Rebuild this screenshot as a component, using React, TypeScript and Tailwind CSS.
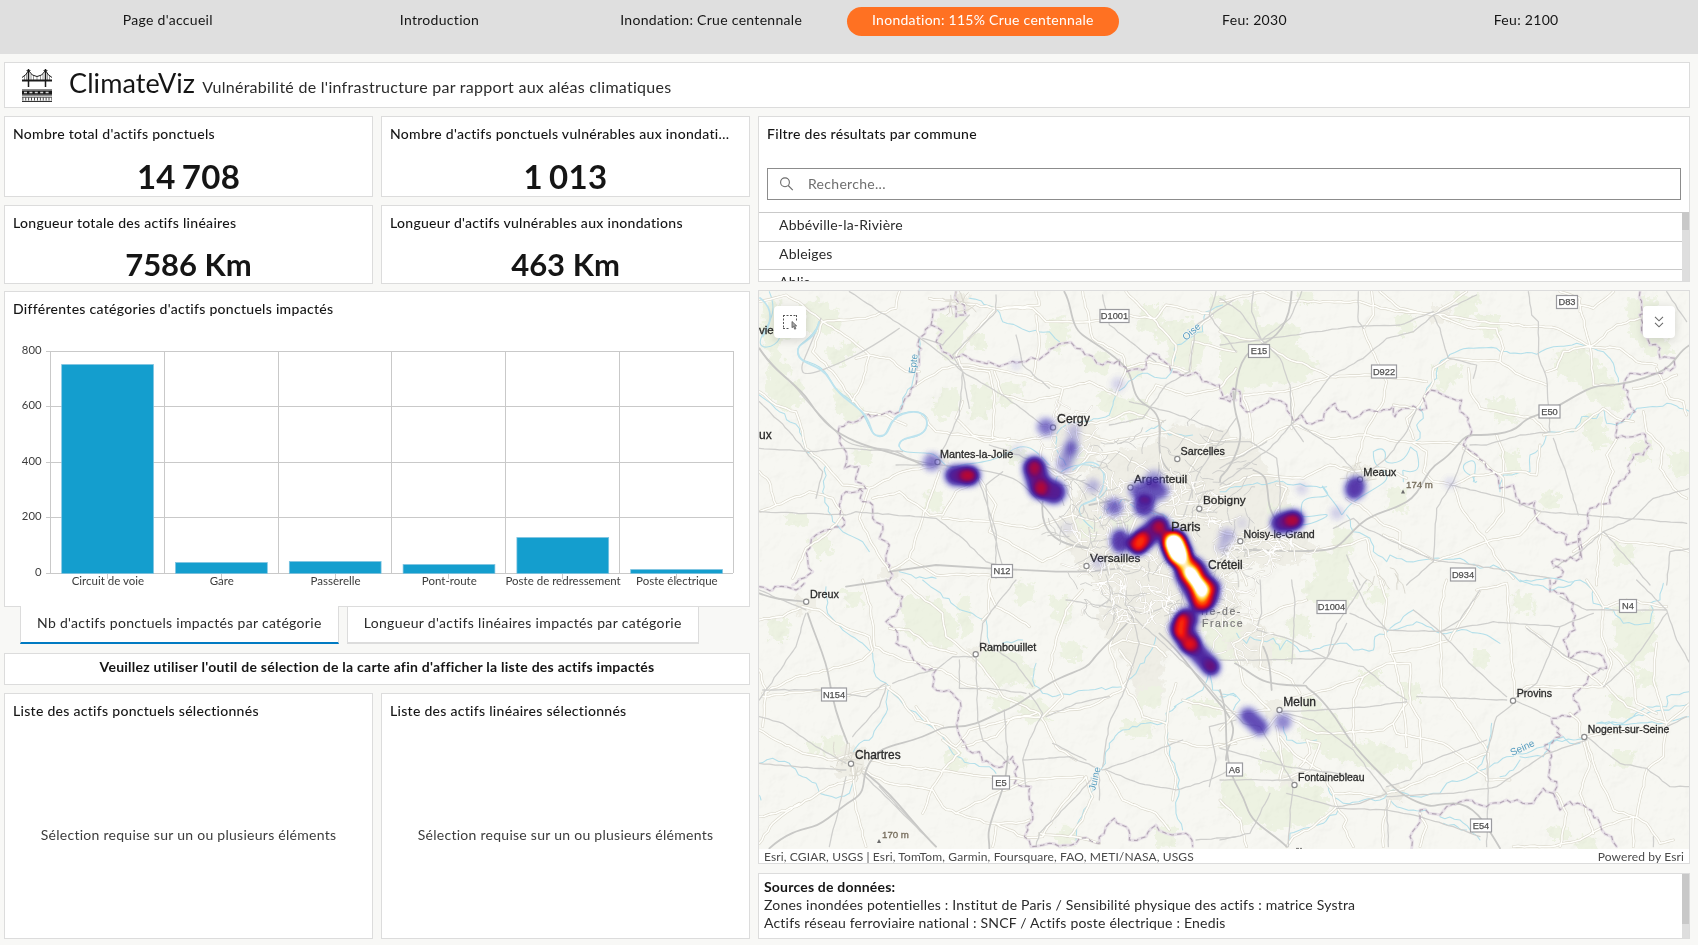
import { ReactNode } from "react";

/* ---------- Map data: each sheet is drawn on its own 3x grid ---------- */

type Sheet = {
  x: number;
  y: number;
  green: string[];
  urban: string[];
  rail: string[];
  motorway: string[];
  road: string[];
  water: string[];
  border: string[];
};

const SHEETS: Sheet[] = [
  {
    x: 756,
    y: 285,
    green: [
      "M20 50h50v30h40v90h-40v60h-30v-40h-20z",
      "M130 60l50-20 60 30 20 60-50 20-60-10z",
      "M210 190h50v-20h40v40h-30v30h-50z",
      "M40 230h60v60h40v60l-50 30-60-50z",
      "M230 310l60 20 40 60-40 30-50-40z",
      "M545 90h90v40h-10v90l-60 10-20-60z",
      "M640 150h50v40h-40z",
      "M650 300h60v70h-20v30h-50z",
      "M730 290h70v40h-30v30h-50z",
      "M880 100h60v70l-30 30h-40z",
      "M980 220l60-20 30 30-20 40-60-10z",
      "M1160 60h60v60h50v50h-70v-30h-60z",
      "M1220 120l90-20 50 60-40 100-80-20z",
      "M1360 30h50v70h-40z",
      "M1100 240h60v40h-50z",
      "M1040 310l60 30 80 10-10 60-90-10-60-40z",
      "M560 310h50v60l-60 40-20-40z",
      "M290 490h60v50h-50z",
      "M500 620h60v60h-50z",
      "M160 760l50-10 20 50-50 20z",
      "M930 470h50v60h-40z",
      "M960 700h60v60h-50z",
      "M1060 700h70v50h-60z",
      "M90 690h60v40h-50z",
      "M750 480l60 20 10 30-60 10z",
    ],
    urban: [
      "M600 30h40v50h-40z",
      "M900 390l100 20 40 60-30 80-60 20-60-60z",
      "M1000 560l80-60 100-20 80-60 160 10v480h-380l-90-90-40-100z",
      "M520 510h60v40h-60z",
      "M370 850h60v30h-60z",
    ],
    rail: [
      "M10 190C60 260 100 280 130 320S220 420 260 460S400 480 440 510S600 540 700 560S800 600 860 660S900 760 1000 790",
      "M195 100C150 220 130 240 140 260S240 240 300 210S400 150 430 130",
      "M10 490L180 500 260 490 440 500",
      "M280 20L480 150 560 210 620 260 740 330 860 420",
      "M620 260L610 390 540 540 420 540",
      "M700 480L760 500 860 540 1000 600",
      "M720 30L720 80 590 210 620 260 640 370",
      "M740 560L690 600 700 700 750 880",
      "M1440 40L1320 120 1300 260 1230 300 1160 400 1060 420",
      "M1120 350L1240 380 1400 440",
      "M10 680L270 690 300 680 540 700 620 760 690 830 760 850",
      "M640 90L560 180 500 160",
      "M880 310L800 240 780 150",
      "M10 350L100 440 150 500 200 560 180 640",
      "M1440 400L1330 560 1280 700 1240 760",
      "M660 560L700 680 720 740 720 880",
      "M1040 30L1060 120 1200 230",
      "M1380 20L1360 90 1440 200",
    ],
    motorway: [
      "M925 20C950 60 940 120 980 150S1080 210 1110 250S1120 330 1170 360S1210 420 1210 480S1240 560 1280 590",
      "M10 190C60 270 120 290 160 350S230 440 300 470S420 500 500 540",
      "M400 860L540 840 700 850 900 860 1000 860 1090 850",
      "M860 650C850 740 900 780 1000 790",
      "M1000 660L1100 640 1220 690 1250 760",
    ],
    road: [
      "M10 50L90 30 140 60 200 110 280 160 340 210 400 220 450 260 490 260",
      "M200 110L170 200 230 260 280 330 320 380 390 390 450 420",
      "M200 110L330 100 420 70 430 20",
      "M10 320L60 360 120 380 140 440 150 490 210 540 260 600 340 610 440 560 540 540",
      "M300 220L340 210 320 290 290 350",
      "M480 300L560 250 620 240 700 250 800 270 830 280 850 180 840 90",
      "M520 40L600 50 720 70 830 70 870 110 1000 110 1010 160 1100 210 1110 250",
      "M840 20L850 60 720 70 640 160 600 210 620 250 700 260 715 330 710 460",
      "M620 350L600 400 650 450 790 470 900 450",
      "M715 260L740 330 820 350 910 330",
      "M500 390L540 440 620 450 700 470 760 460",
      "M830 280L920 310 1000 290 1080 330 1110 250 1180 230 1300 260 1310 170 1440 200",
      "M920 310L900 390 960 420 1050 410 1120 380 1220 410",
      "M980 20L1000 110 1100 90 1200 100 1230 60 1370 90 1300 150",
      "M1110 20L1190 100 1260 180 1250 240",
      "M10 680L60 660 160 620 230 640 260 690 210 750 150 790 110 880",
      "M60 660L40 590 10 560",
      "M340 610L310 700 340 760 400 860 460 820 500 700 550 560",
      "M350 640L430 620 520 690 560 690 600 620 640 600",
      "M460 820L540 870 700 870",
      "M560 700L700 710 830 730 950 690 940 590 870 540",
      "M670 580L720 660 700 740 770 780 860 830 960 780",
      "M860 480L850 530 900 570 960 560 1000 510 1080 500 1180 560",
      "M950 690L1020 710 1090 680 1160 620",
      "M950 690L980 790 1060 830 1140 850 1250 880",
      "M1340 600L1250 640 1140 700 1100 810",
      "M1370 440L1300 560 1240 600 1260 690 1380 700",
      "M1080 640L1110 740 1050 800 1030 880",
      "M1440 460L1330 480 1240 440 1060 470 960 440",
      "M1170 350L1200 300 1290 330 1390 310 1440 250",
    ],
    water: [
      "M40 20C70 90 30 120 15 160S60 190 70 160",
      "M190 110C170 170 120 170 125 205S190 220 220 280S280 330 310 370S340 450 370 455S390 400 440 385S530 390 510 430S430 450 430 480S480 500 520 505S560 560 600 545S700 540 760 500S850 510 880 540",
      "M490 160L485 230 470 290 440 340 430 380",
      "M640 40L720 70 740 110 820 140 880 140 910 170",
      "M1400 60L1350 80 1340 140 1260 180 1250 250 1230 280 1160 265 1080 320 1060 390 1000 410 930 420 900 450 900 490 930 540",
      "M900 600C890 540 1010 520 1040 560S1050 640 1000 650S970 700 1010 730",
      "M10 330L70 380 130 430 150 500 210 540 200 620 230 710 260 740 320 770 340 800",
      "M1030 700L1100 640 1140 670 1250 700 1300 780 1340 850",
      "M1170 440L1210 420 1240 450 1310 450",
      "M430 860L480 880 540 880",
    ],
    border: [
      "M600 20L605 50 625 60 630 90 600 95 600 65 530 75 525 120 490 160 490 220 480 300 430 380 320 395 250 425 250 470 270 500 265 550 310 545 300 590 330 610 270 620 250 660 265 720 180 750 150 800 170 860 110 900",
      "M525 120L560 140 540 170 560 200 590 220 620 208 670 230 720 240 800 230 860 215 900 185 945 172 960 190 1000 210 1040 240 1090 225 1110 260 1160 255 1190 205 1240 240 1245 260 1330 270 1340 290 1390 300 1400 340 1440 345",
      "M310 610L320 650 350 660 350 700 380 720 370 760 400 780 390 830 410 870 395 900",
    ],
  },
  {
    x: 1220,
    y: 285,
    green: [
      "M0 50h110v70h40v60h80l70 60-50 50-130 10-80 30H0z",
      "M150 120l70-10 30 40-40 40-60-10z",
      "M230 20h50v40h-40z",
      "M520 90h60v60h-40z",
      "M700 20l80 10-10 60-60 20z",
      "M640 240h80v50l-60 30z",
      "M770 90h70v70h-50z",
      "M1000 200l90-10 60 60 60 60-10 70-80-30-50-60-60-20z",
      "M1220 40h90v80l60 90h-90l-50-60z",
      "M800 340h90v70h-60z",
      "M1080 400l60-10 30 80-50 30z",
      "M1230 470h60v60h-60z",
      "M1350 500h60v70h-50z",
      "M280 800h110v100H290z",
      "M340 730h60v70h-60z",
      "M500 610h60v70h-50z",
      "M140 660h80v70h-70z",
      "M850 500h50v70h-40z",
      "M960 620h60v50h-50z",
      "M1180 780h60v60h-60z",
    ],
    urban: ["M0 460h100l40 90 60 60 20 110 70 60-60 60H60l-60 60z", "M390 540h60v60h-60z", "M630 60h60v50h-60z"],
    rail: [
      "M100 20L95 80 125 165 180 220 210 300 215 420 250 470",
      "M0 180L120 165 400 125 540 120 640 80",
      "M245 20L210 100 125 165",
      "M415 20L415 110 430 130",
      "M0 40L60 80 125 165",
      "M770 30L640 90 580 140 500 160 430 220 330 275 250 380 150 490 0 600",
      "M640 90L660 130 685 220 770 240 760 280",
      "M925 20L935 90 955 110 955 210 980 280 990 440",
      "M240 420L340 490 400 555",
      "M590 370L560 440 500 520 410 590",
      "M740 480L700 590 650 670 640 830 560 900",
      "M690 600L860 640 960 680 1100 690 1400 715",
      "M1000 460L1040 570 1075 690",
      "M1410 610L1300 640 1240 700 1150 740 1080 800 1000 850",
      "M1150 740L1230 830 1290 900",
      "M340 730L400 700 420 720 560 790 640 825 760 840 990 880",
      "M990 440L900 450 800 480 750 480",
      "M1340 20L1400 110",
      "M0 470L90 470 120 490 170 520 180 600 180 780",
      "M1340 900L1350 800 1410 790",
      "M0 550L140 470",
      "M380 810L420 900",
    ],
    motorway: [
      "M215 20C210 120 170 160 120 180S50 250 45 340",
      "M40 320C40 420 80 420 50 500S0 560 0 590",
      "M1410 180C1370 200 1370 240 1310 265S1200 300 1150 302S1060 340 1000 370S930 390 900 420S800 450 760 450S710 500 660 530S610 620 560 650S470 680 430 710S370 780 340 790S200 800 100 795S20 790 0 830",
      "M100 555C140 570 140 580 145 640S180 720 230 760",
    ],
    road: [
      "M0 50L130 20 200 50 330 50 420 50 530 80 640 85 780 110 1010 130 1110 185",
      "M455 20L460 90 430 130 450 180 500 290 490 350 440 430 420 500 400 560",
      "M330 275L450 270 620 290",
      "M0 140L60 160 120 165 200 220 260 240 330 275 190 320 70 330 90 400 100 480",
      "M640 85L700 110 760 130 830 130 850 190 840 230 900 270 980 300",
      "M480 20L540 70 640 90 700 50 740 20",
      "M840 230L690 220 640 250 640 290 590 370 520 360",
      "M745 250L750 320 780 370 880 390 940 400 980 440",
      "M1180 20L1120 70 1080 60 1110 185 1030 200 1010 250 980 260",
      "M1110 185L1190 120 1260 100",
      "M1110 185L1200 190 1250 230 1310 240",
      "M1110 185L1120 300 1180 300",
      "M1020 20L1080 40 1080 80",
      "M970 450L1070 435 1120 390 1150 370 1190 400 1240 410",
      "M1310 250L1350 340 1390 350 1400 390",
      "M1270 380L1280 440 1330 490 1320 550 1360 610 1400 640",
      "M190 430L230 420 330 460 430 450 540 470 720 475",
      "M190 430L130 470 60 510 0 520",
      "M210 310L220 360 215 430",
      "M580 475L620 500 610 560 640 590 700 600",
      "M580 460L560 400 590 370",
      "M700 600L760 570 900 560 950 570 960 480",
      "M730 490L800 540 850 580 850 680 800 740",
      "M640 830L700 810 800 770 900 750 960 680",
      "M700 600L730 680 800 770 850 850 880 880",
      "M400 560L330 540 250 580 100 570 0 610",
      "M400 560L490 550 560 580",
      "M380 640L420 660 490 720 540 740 540 790",
      "M0 790L100 770 180 760 270 800 380 780 440 760",
      "M440 760L450 810 490 900",
      "M640 825L580 790 490 750",
      "M1190 460L1160 510 1180 560 1150 640 1140 740 1130 900",
      "M1060 800L1140 740 1200 770 1330 780 1410 800",
      "M1240 310L1300 300 1370 270",
      "M0 740L80 760 150 720 200 610 170 600",
      "M0 880L60 850 80 900",
      "M830 450L850 500 850 560",
    ],
    water: [
      "M680 220L720 195 760 190 830 190 870 205 950 208 1000 185 1070 175 1100 185 1150 200 1180 235 1195 290",
      "M680 220L655 240 650 280 620 310 600 370 610 400 590 420 600 460 585 470",
      "M1410 380L1340 355 1310 365 1250 370 1230 400 1190 420 1160 415 1150 370 1130 400 1085 395 1060 440 980 440 960 490 930 510 930 560 850 570 840 620",
      "M760 590C770 540 770 520 745 530S730 560 750 570S760 600 770 590",
      "M590 500C600 540 600 560 570 560S550 540 550 590",
      "M460 500C490 480 500 500 495 520S540 540 560 510S560 480 590 500",
      "M460 500C460 560 490 540 500 570S430 620 390 660S380 700 340 650S300 590 320 620S250 620 245 660S240 700 300 690S280 720 240 720",
      "M0 620L80 600 190 590 220 600 320 605",
      "M380 690L400 740 450 760 460 800 500 830 510 810 560 830 640 820 720 820 780 850 820 840 880 870 900 890 1000 880 1060 890",
    ],
    border: [
      "M0 340L30 350 40 310 60 320 70 370 95 380 130 360 150 340 200 360 220 410 245 390 260 415 310 405 320 375 345 355 360 380 400 400 430 380 480 380 520 365 525 395 550 370 620 370 610 340 630 315 680 335 725 345 720 380 745 400 755 440 730 480 770 510 800 550 830 570 840 610 880 600 900 660 945 650 950 700 990 730 1040 750 1040 780 1080 760 1080 820 1020 825 995 830 1030 860 990 900",
      "M1260 20L1265 140 1290 180 1320 190 1320 220 1365 220 1365 245 1310 265 1230 265 1210 310 1245 380 1190 415 1190 460 1240 455 1270 445 1290 480 1270 510 1240 510 1220 570 1180 610 1170 655 1110 670 1100 730 1080 740 1085 820",
    ],
  },
  {
    x: 756,
    y: 580,
    green: [
      "M430 50l120 10 60 80-30 70-130-40z",
      "M600 60l40-20 10 120-30 20z",
      "M680 210l110 10 40 80-90 20-70-60z",
      "M790 230l40 40 10 60-50-20z",
      "M770 10h60v60h-50z",
      "M880 50h60v80h-40z",
      "M770 350l90 10 30 60-80 10z",
      "M700 350h70v40h-60z",
      "M30 120h70v60h-60z",
      "M200 470h60v50h-60z",
      "M150 490h40v30h-40z",
      "M260 30h60v50h-50z",
      "M910 190h70v50h-60z",
      "M1100 420h90v50h-80z",
      "M1150 320h60v60h-60z",
      "M900 740h60v60h-60z",
      "M1330 130l80 10 30 60v40h-70z",
      "M1300 360h90v50h-80z",
      "M1200 740h60v60h-60z",
      "M560 520l50-10 20 50-50 20z",
    ],
    urban: ["M240 500h90v90h-90z", "M1090 0h350v90l-100 60-90 60-110 60-60-60-60-90z", "M120 50h60v50h-60z", "M1100 150h120v200h-80z", "M640 200h40v40h-40z"],
    rail: [
      "M10 360L120 200 150 100",
      "M20 330L180 330 250 340 330 350 390 310",
      "M10 410L80 430 180 500 270 550",
      "M390 320L370 380 290 470",
      "M150 90L10 30",
      "M270 590L220 800",
      "M10 550L120 560 270 570",
      "M660 230L665 420 680 480 760 550",
      "M660 230L590 230 540 270 490 280 410 310",
      "M670 200L680 130 740 50 780 0",
      "M690 190L780 250 830 320",
      "M745 390L755 530",
      "M820 340L860 400 820 480 800 540 810 620",
      "M800 540L940 530 1040 570 1100 550 1280 480",
      "M870 410L960 370 1060 350",
      "M890 490L990 540",
      "M1030 570L960 650 850 760 840 800",
      "M1040 560L1060 430 1110 320 1150 190 1130 110",
      "M1050 570L1150 610 1260 630 1360 600 1440 560",
      "M370 620L540 800",
      "M320 580L410 670 540 800",
      "M1030 80L1060 60 1130 110 1200 170 1330 290 1390 360",
      "M610 240L610 325 700 325 810 340",
      "M1270 60L1180 100 1050 80 930 60",
      "M1440 420L1360 440 1380 540 1360 620",
      "M1440 770L1320 780",
      "M1030 660L1030 570",
    ],
    motorway: [
      "M155 100C180 180 210 230 220 300S250 430 275 490",
      "M270 20L400 0",
      "M40 805C90 760 130 750 170 740S240 690 290 660S310 600 340 550S400 500 470 480S540 440 600 440S700 410 750 390S840 330 900 300S990 270 1010 240S1100 150 1130 110",
      "M755 530C750 620 730 650 710 710S700 770 700 805",
      "M10 40C60 60 100 60 150 65",
      "M330 580C420 650 460 720 540 800",
      "M1210 160C1280 220 1310 280 1390 370S1410 480 1410 540",
    ],
    road: [
      "M10 120L80 110 140 80 190 90 240 130 340 170 350 210 320 240 220 270 120 290 20 340",
      "M320 0L345 80 355 200 440 240 560 270 620 310 720 340",
      "M10 270L30 340 20 440",
      "M10 450L60 480 140 520 230 540 290 520",
      "M390 320L430 350 480 420 520 430 560 440",
      "M400 320L250 350 180 330 20 350",
      "M290 600L220 620 120 680 60 700 10 710",
      "M290 560L300 690 330 800",
      "M340 540L450 560 540 570 700 590 820 600 980 590",
      "M320 570L400 610 530 630 560 680 600 700 720 640 820 600",
      "M560 480L610 520 570 560 530 620 500 700",
      "M600 700L700 730 780 730 820 720",
      "M480 380L540 450 600 500 640 450 790 410 860 410",
      "M660 240L570 170 560 100 470 30 440 0",
      "M660 240L700 290 740 350 850 400 900 500 960 540",
      "M860 410L920 350 880 270 900 180 930 90 980 30",
      "M680 120L700 100 700 0",
      "M400 145L460 150 520 200 600 220",
      "M620 500L720 470 760 420 840 400",
      "M990 590L1010 650 980 720 940 770",
      "M990 590L900 700 860 770 800 770 720 730",
      "M1050 570L1100 660 1200 700 1240 750",
      "M1090 210L1130 260 1100 330 1060 350 1000 380 880 400",
      "M1060 200L1100 180 1200 200 1230 230",
      "M1100 110L1060 200 1100 320 1140 360 1160 410 1230 430",
      "M1260 310L1240 370 1230 440 1230 520 1260 590 1250 660",
      "M1240 480L1340 500 1440 490",
      "M720 740L710 800",
      "M10 790L50 730 130 670",
      "M1280 360L1440 400",
      "M850 760L950 770 1030 790",
      "M820 140L760 100 720 80 700 30",
    ],
    water: [
      "M210 20L215 100 260 150 320 190 350 220 360 290 400 320 390 400 350 470 310 490 290 520",
      "M390 320L440 370 500 420 560 470 590 520 640 550 700 560 720 580",
      "M10 550L50 535 100 550 140 590 180 610 190 640 240 655 280 640 290 610",
      "M700 190L690 120 600 80 540 30 500 0",
      "M740 190L800 180",
      "M840 250L830 300 860 340 890 350 1000 330 1100 320 1140 280 1180 220 1200 170",
      "M1220 430L1170 430 1100 450 1060 490 1040 560 1010 600 1005 660 970 720 960 780",
      "M1260 380L1230 400 1230 440 1240 520 1270 600 1260 700 1280 750",
      "M1255 380L1340 330 1360 270 1370 330 1440 350",
      "M0 640L15 660",
    ],
    border: [
      "M10 20L50 30 90 20 120 30 145 10",
      "M390 0L440 50 435 80 390 125 420 150 420 190 460 210 500 265 540 270 530 320 590 340 615 380 605 450 635 510 670 515 680 545 740 560 770 530 785 560 775 610 825 620 820 660 830 700 805 770 825 800 960 790 970 775 1030 790 1050 740 1075 715 1110 740 1120 780 1170 770 1200 735 1230 760 1290 760 1310 800",
    ],
  },
  {
    x: 1220,
    y: 580,
    green: [
      "M250 0h130l40 40-50 50-110-20z",
      "M200 110h70v60h-60z",
      "M150 180h70v60h-70z",
      "M250 340l90 60 60 80 100 10 90 60-90 30-150-40-110-60z",
      "M10 600l60-20 70 50 80-20 80 10 40 60-60 50-120 20-80-20-80-50z",
      "M120 510h100v70h-100z",
      "M540 310h60v50h-60z",
      "M760 210h50v50h-60z",
      "M880 40h60v60h-50z",
      "M1180 80l120 10 10 90-60 90-60-60z",
      "M1170 350h70v60h-70z",
      "M1250 270h60v50h-60z",
      "M1180 510h60v50h-60z",
      "M990 740h60v40h-60z",
      "M1070 770h60v40h-60z",
      "M440 20h60v50h-60z",
      "M420 270h60v50h-60z",
      "M0 120h60v60H0z",
    ],
    urban: ["M0 0h60v130h60l60 60-40 80-80-20-60-80z", "M130 360h60v60h-60z", "M490 620h60v40h-60z", "M180 590h50v60h-50z"],
    rail: [
      "M120 0L125 100 110 150 215 180 320 235 430 260 500 320 560 360",
      "M215 0L225 70 215 250",
      "M0 240L130 240 320 235 380 130",
      "M440 0L380 90 350 130 320 235 250 310",
      "M390 100L500 150 660 155 820 125 1020 140 1120 100",
      "M500 150L440 80 400 0",
      "M580 90L660 155 760 260 860 350",
      "M660 155L720 120 780 30",
      "M920 145L1040 230 1150 270",
      "M1020 140L980 240 950 310 880 360 990 410",
      "M590 350L860 360",
      "M560 365L450 380 300 390 180 395",
      "M190 400L280 420 400 510 500 640",
      "M0 360L70 430 120 440 180 540 220 610 210 690 205 800",
      "M0 600L220 600",
      "M500 640L420 670 350 680 200 640",
      "M500 650L700 640 830 620 980 520 1100 480",
      "M500 660L505 800",
      "M800 800L805 600 800 520 830 410 880 370",
      "M500 620L570 600 610 550 800 480",
      "M1100 470L1200 550 1280 565 1350 620 1410 620",
      "M1410 250L1370 180 1340 90 1250 0",
      "M1340 100L1240 240 1150 320",
      "M1340 90L1100 90 1020 50",
      "M600 710L700 740 780 770",
      "M0 505L200 560 420 590",
      "M0 780L90 760 150 640",
      "M1300 800L1300 770",
      "M350 685L500 690 600 710",
      "M1340 440L1400 410",
    ],
    motorway: [
      "M0 330C30 420 10 460 25 540S60 620 80 680S150 750 200 800",
      "M45 250C100 280 110 310 200 315S240 310 270 330S340 400 370 450S440 540 470 570S530 640 590 665S640 670 700 670S790 720 840 805",
      "M130 200C150 240 150 270 155 330",
    ],
    road: [
      "M0 140L50 100 110 120 190 80 260 60",
      "M110 150L40 190 60 260 70 310 110 350 150 390 50 400 0 450",
      "M130 150L120 260 180 280 215 300 240 340",
      "M480 0L500 60 490 140 510 200 550 350 560 500",
      "M680 0L660 100 665 320 740 420 800 510",
      "M770 30L860 10 870 180 885 350",
      "M885 350L920 320 1150 320",
      "M570 250L500 250 430 290 320 330 200 360",
      "M430 290L400 360 400 500",
      "M560 370L520 430 490 450 340 460 290 460 180 400",
      "M520 430L530 460 670 490 800 590",
      "M570 250L570 370 600 420 605 550",
      "M510 220L620 200 690 180 740 100 780 30",
      "M170 440L190 560 180 600 270 570 300 490 260 480 270 520 240 560",
      "M180 470L220 520 300 570 340 640 350 680",
      "M800 520L700 560 540 630 500 640",
      "M340 640L420 640 480 650",
      "M350 680L280 740 220 770 200 800",
      "M350 680L380 720 370 740 400 800",
      "M510 660L490 720 490 800",
      "M0 660L60 720 80 800",
      "M0 500L50 480 130 460 170 410",
      "M1100 0L1150 80 1145 170 1175 250 1150 320",
      "M1150 80L1220 60 1340 80",
      "M1150 320L1080 260 1020 220 920 140",
      "M1150 310L1220 380 1340 430",
      "M1170 210L1240 290 1250 370 1310 400",
      "M1310 190L1300 300 1340 430 1410 370",
      "M1340 430L1330 530 1280 570 1250 710",
      "M1100 480L1140 600 1180 690 1240 710 1280 730 1320 790 1360 780",
      "M1090 480L1110 550 1080 640 1120 760",
      "M1010 640L1040 700 1020 800",
      "M1240 710L1240 800",
      "M1240 710L1150 740 1080 780 990 800 880 800",
      "M1100 470L1150 460 1230 450 1340 440",
      "M1080 470L1080 430 1050 400",
      "M600 800L620 740 600 700",
      "M805 520L800 600 870 600",
    ],
    water: [
      "M50 160L80 190 90 170 140 185 160 175 180 210 200 180 240 215 300 205 380 190 400 210 460 210 465 170 520 150 590 125 660 160 740 150 800 165 840 190",
      "M510 145L550 110 580 90",
      "M900 0L1000 30 1080 0 1120 30 1120 70 1180 90 1210 130 1290 130 1300 90 1290 70 1320 60 1330 10",
      "M1410 335L1340 350 1340 380 1280 380 1210 430 1130 430 1150 430 1250 430 1330 430 1410 410",
      "M1410 370L1330 390 1240 410 1200 435",
      "M1100 480L1060 480 1000 480 970 500 920 520 860 530 810 560 750 590 680 610 660 640",
      "M1080 490L1050 490 1030 470 990 490 970 530 900 530",
      "M900 540L880 570 840 590",
      "M815 430L800 520 770 580",
      "M660 640L590 650 520 630 480 660 430 660 370 670 330 640 320 600",
      "M510 660L530 680 580 690 620 690",
      "M660 710L720 720 760 760 780 780",
      "M670 730L740 750",
      "M190 440L200 480 240 490 290 480",
      "M355 690L310 730 240 750 210 760 210 790",
      "M0 350L40 340 60 360 40 390",
    ],
    border: [
      "M990 0L990 35 1030 40 1060 70 1065 150 1030 180 1045 235 1100 215 1135 220 1160 265 1105 290 1100 310 1060 345 1080 390 1050 410 995 415 1025 470 975 495 995 530 985 590 1010 605 1000 640 1020 690 1050 665 1090 675 1140 730 1190 800",
      "M1000 640L970 625 940 670 860 660 800 680 740 660 680 680 660 705 600 690 590 740 570 770 575 805",
    ],
  },
];

/* Adds the small irregularities of a surveyed line to a coarse polyline. */
function roughen(d: string, amp: number): string {
  if (d.includes("C")) return d;
  const n = d.match(/-?\d+(\.\d+)?/g)!.map(Number);
  let out = `M${n[0]} ${n[1]}`;
  let seed = n[0] * 7 + n[1] * 13 + 1;
  const rnd = () => {
    seed = (seed * 9301 + 49297) % 233280;
    return seed / 233280 - 0.5;
  };
  for (let i = 2; i < n.length; i += 2) {
    const [x0, y0, x1, y1] = [n[i - 2], n[i - 1], n[i], n[i + 1]];
    const len = Math.hypot(x1 - x0, y1 - y0);
    const steps = Math.max(1, Math.round(len / 16));
    for (let s = 1; s < steps; s++) {
      const t = s / steps;
      out += `L${(x0 + (x1 - x0) * t + rnd() * amp).toFixed(1)} ${(y0 + (y1 - y0) * t + rnd() * amp).toFixed(1)}`;
    }
    out += `L${x1} ${y1}`;
  }
  return out;
}

/* Short random streets around a centre, for the built-up areas. */
function streets(cx: number, cy: number, rx: number, ry: number, count: number, start: number): string {
  let seed = start;
  const rnd = () => {
    seed = (seed * 9301 + 49297) % 233280;
    return seed / 233280;
  };
  let out = "";
  for (let i = 0; i < count; i++) {
    const a = rnd() * Math.PI * 2;
    const r = Math.sqrt(rnd());
    let x = cx + Math.cos(a) * rx * r;
    let y = cy + Math.sin(a) * ry * r;
    let dir = rnd() * Math.PI * 2;
    out += `M${x.toFixed(1)} ${y.toFixed(1)}`;
    for (let s = 0; s < 4; s++) {
      x += Math.cos(dir) * (2 + rnd() * 5);
      y += Math.sin(dir) * (2 + rnd() * 5);
      dir += (rnd() - 0.5) * 1.4;
      out += `L${x.toFixed(1)} ${y.toFixed(1)}`;
    }
  }
  return out;
}

const HALO = "#f6f6f2";

function Place({ x, y, size = 12, dot, children, fill = "#2a2a2a" }: { x: number; y: number; size?: number; dot?: [number, number]; children: string; fill?: string }) {
  return (
    <>
      {dot && <circle cx={dot[0]} cy={dot[1]} r={2.6} fill="#fff" stroke="#8c8c8c" strokeWidth={1.2} />}
      <text x={x} y={y} fontSize={size} fill={fill} stroke={fill} strokeWidth={0.3}>
        {children}
      </text>
    </>
  );
}

const SHIELDS: [string, number, number, number][] = [
  ["D1001", 1114.5, 316, 29],
  ["D83", 1567, 302, 21],
  ["E15", 1259, 351, 21],
  ["D922", 1384, 371.5, 25],
  ["E50", 1549.5, 411.5, 21],
  ["N12", 1002, 571, 21],
  ["D934", 1463, 574.5, 25],
  ["D1004", 1331.5, 607, 29],
  ["N4", 1628, 606, 17],
  ["N154", 834, 694.5, 25],
  ["A6", 1234.5, 769.5, 16],
  ["E5", 1001, 782.5, 17],
  ["E54", 1481, 825.5, 21],
];

function HeatLayer() {
  return (
    <g filter="url(#heat)" stroke="#fff" fill="#fff" strokeLinecap="round" strokeLinejoin="round">
      <g stroke="none" filter="url(#soft)">
        <circle cx={932} cy={462} r={9} opacity={0.16} />
        <circle cx={1046} cy={427} r={9} opacity={0.17} />
        <circle cx={1114} cy={507} r={9} opacity={0.18} />
        <circle cx={1093} cy={486} r={7} opacity={0.09} />
        <circle cx={1118} cy={384} r={7} opacity={0.05} />
        <circle cx={1098} cy={563} r={6} opacity={0.06} />
        <circle cx={1227} cy={536} r={8} opacity={0.09} />
        <circle cx={1222} cy={547} r={6} opacity={0.07} />
        <circle cx={1242} cy={523} r={6} opacity={0.04} />
        <circle cx={1302} cy={489} r={6} opacity={0.05} />
        <circle cx={1337} cy={513} r={7} opacity={0.06} />
        <circle cx={1450} cy={483} r={6} opacity={0.04} />
        <circle cx={1283} cy={722} r={8.5} opacity={0.15} />
        <circle cx={1067} cy={528} r={6} opacity={0.03} />
        <circle cx={1018} cy={451} r={7} opacity={0.03} />
        <circle cx={1016} cy={365} r={5} opacity={0.04} />
        <g fill="none" stroke="#fff">
          <path d="M1074 430L1071 450" strokeWidth={12} opacity={0.08} />
          <path d="M1071 448L1064 465" strokeWidth={15} opacity={0.13} />
          <path d="M1248 716L1260 727" strokeWidth={17} opacity={0.22} />
          <path d="M955 475.5L970 475.5" strokeWidth={20} opacity={0.32} />
          <path d="M1034.5 468L1040 487L1054 492" strokeWidth={23} opacity={0.33} />
          <path d="M1281 523L1294 520" strokeWidth={20} opacity={0.33} />
          <path d="M1138 544L1159 526" strokeWidth={21} opacity={0.35} />
          <path d="M1174 543L1179 554" strokeWidth={27} opacity={0.3} />
          <path d="M1191 573L1203 594" strokeWidth={32} opacity={0.35} />
          <path d="M1181 558L1191 572" strokeWidth={21} opacity={0.35} />
          <path d="M1202 592L1202 603" strokeWidth={20} opacity={0.38} />
          <path d="M1204 585L1214 586" strokeWidth={14} opacity={0.22} />
          <path d="M1181 560L1190 572" strokeWidth={13} opacity={0.5} />
          <path d="M1191 574L1202 591" strokeWidth={17} opacity={0.5} />
          <path d="M1201 590L1202 600" strokeWidth={11} opacity={0.35} />
          <path d="M1174 543L1178 553" strokeWidth={22} opacity={1} />
          <path d="M1191 574L1202 589" strokeWidth={14} opacity={1} />
          <path d="M1187 619L1181 628L1189 642" strokeWidth={22} opacity={0.36} />
          <path d="M1182 620L1180 633" strokeWidth={12} opacity={0.46} />
          <path d="M1192 646L1211 667" strokeWidth={18} opacity={0.29} />
        </g>
        <ellipse cx={1355} cy={488} rx={10} ry={12} opacity={0.26} transform="rotate(20 1355 488)" />
        <ellipse cx={1149} cy={491} rx={20} ry={11} opacity={0.2} />
        <circle cx={1144} cy={506} r={10.5} opacity={0.27} />
        <circle cx={1154} cy={479} r={9} opacity={0.12} />
        <ellipse cx={1120} cy={541} rx={9.5} ry={12} opacity={0.26} />
        <ellipse cx={967.5} cy={475.5} rx={9} ry={7.5} opacity={0.28} />
        <ellipse cx={1034.5} cy={468} rx={7} ry={9} opacity={0.24} />
        <ellipse cx={1041} cy={488} rx={7.5} ry={9} opacity={0.26} />
        <ellipse cx={1292} cy={520.5} rx={9} ry={7.5} opacity={0.25} />
        <circle cx={1159} cy={527} r={7} opacity={0.25} />
        <ellipse cx={1140} cy={542} rx={8} ry={11} opacity={0.46} transform="rotate(30 1140 542)" />
        <ellipse cx={1186} cy={641} rx={6} ry={8} opacity={0.14} transform="rotate(-35 1186 641)" />
        <circle cx={1211} cy={666} r={7.5} opacity={0.14} />
      </g>
    </g>
  );
}

function ParisMap() {
  return (
    <svg className="block h-[558px] w-[930px]" viewBox="759 291 930 558" fontFamily="'Liberation Sans', Arial, sans-serif">
      <defs>
        <filter id="soft" filterUnits="userSpaceOnUse" x="759" y="291" width="930" height="558" colorInterpolationFilters="sRGB">
          <feGaussianBlur stdDeviation="3.1" />
        </filter>
        <filter id="heat" filterUnits="userSpaceOnUse" x="759" y="291" width="930" height="558" colorInterpolationFilters="sRGB">
          <feColorMatrix type="matrix" values="0 0 0 1 0  0 0 0 1 0  0 0 0 1 0  0 0 0 1 0" result="m" />
          <feComponentTransfer in="m">
            <feFuncR type="table" tableValues=".34 .32 .27 .27 .42 .70 .95 1 1 1 1" />
            <feFuncG type="table" tableValues=".33 .29 .18 .10 .05 .03 .07 .35 .8 1 1" />
            <feFuncB type="table" tableValues=".80 .76 .68 .60 .46 .22 .06 0 .2 1 1" />
            <feFuncA type="table" tableValues="0 .42 .8 .96 1 1 1 1 1 1 1" />
          </feComponentTransfer>
        </filter>
        <filter id="relief" x="0" y="0" width="100%" height="100%" colorInterpolationFilters="sRGB">
          <feTurbulence type="fractalNoise" baseFrequency="0.045" numOctaves="4" seed="8" />
          <feDiffuseLighting surfaceScale="1.5" lightingColor="#ffffff" diffuseConstant="1.15">
            <feDistantLight azimuth="225" elevation="60" />
          </feDiffuseLighting>
        </filter>
        <filter id="ragged" x="-5%" y="-5%" width="110%" height="110%" colorInterpolationFilters="sRGB">
          <feTurbulence type="fractalNoise" baseFrequency="0.05" numOctaves="3" seed="3" />
          <feDisplacementMap in="SourceGraphic" scale="44" xChannelSelector="R" yChannelSelector="G" />
        </filter>
      </defs>
      <rect x="759" y="291" width="930" height="558" fill="#f7f7f2" />
      {SHEETS.map((s) => (
        <g key={`land-${s.x}-${s.y}`} transform={`translate(${s.x} ${s.y}) scale(.33333)`} filter="url(#ragged)">
          <path d={s.urban.join("")} fill="#efeee6" />
          <path d={s.green.join("")} fill="#edf2e2" />
        </g>
      ))}
      <rect x="759" y="291" width="930" height="558" filter="url(#relief)" opacity="0.14" className="mix-blend-multiply" />
      <g fill="none" strokeLinejoin="round" strokeLinecap="round">
        {SHEETS.map((s) => (
          <g key={`lines-${s.x}-${s.y}`} transform={`translate(${s.x} ${s.y}) scale(.33333)`}>
            <path d={s.border.map((d) => roughen(d, 14)).join("")} stroke="#e6dfe6" strokeWidth="9" />
            <path d={s.water.map((d) => roughen(d, 9)).join("")} stroke="#b3dfea" strokeWidth="3.2" />
            <path d={s.road.map((d) => roughen(d, 5)).join("")} stroke="#dad7cb" strokeWidth="8.4" />
            <path d={s.road.map((d) => roughen(d, 5)).join("")} stroke="#fffffc" strokeWidth="4.8" />
            <path d={s.rail.map((d) => roughen(d, 3)).join("")} stroke="#cfcfcd" strokeWidth="3.8" />
            <path d={s.motorway.join("")} stroke="#c8c8c6" strokeWidth="5.4" />
            <path d={s.border.map((d) => roughen(d, 14)).join("")} stroke="#b3a6b5" strokeWidth="3.4" strokeDasharray="14 9" strokeLinecap="butt" />
          </g>
        ))}
        <path d="M760 298C776 310 770 326 763 336M819 322C814 345 796 340 798 353S820 362 830 380S850 400 862 412S868 436 880 436S886 420 903 414S930 416 926 428S900 434 899 446" stroke="#bde3ee" strokeWidth="1.8" />
        <path d="M1073 470C1090 455 1105 464 1104 480S1095 500 1082 505" stroke="#bde3ee" strokeWidth="1.5" />
        <path d={streets(1150, 545, 85, 85, 230, 17)} stroke="#dad7cb" strokeWidth="1.9" />
        <path d={streets(1150, 545, 85, 85, 230, 17)} stroke="#fff" strokeWidth="1.1" />
        <path d={streets(1160, 530, 105, 110, 150, 91)} stroke="#d0d0cd" strokeWidth="1" />
        <path d={streets(1240, 610, 40, 55, 34, 31) + streets(1072, 435, 22, 28, 24, 5) + streets(1275, 548, 36, 20, 24, 77)} stroke="#dad7cb" strokeWidth="1.8" />
        <path d={streets(1240, 610, 40, 55, 34, 31) + streets(1072, 435, 22, 28, 24, 5) + streets(1275, 548, 36, 20, 24, 77)} stroke="#fff" strokeWidth="1.1" />
        <path d={streets(851, 764, 13, 13, 14, 13) + streets(956, 302, 8, 10, 8, 3) + streets(1386, 580, 16, 8, 6, 41) + streets(1355, 478, 8, 12, 8, 44)} stroke="#dcdad1" strokeWidth="1" />
      </g>

      <g>
        <Place x={759} y={333.5} size={11.5}>vier</Place>
        <Place x={759} y={438.5}>ux</Place>
        <Place x={1057} y={423} size={12.3} dot={[1053, 427.5]}>Cergy</Place>
        <Place x={940} y={458} size={10.8} dot={[937.5, 462]}>Mantes-la-Jolie</Place>
        <Place x={1180.5} y={455} size={10.8} dot={[1177.3, 459]}>Sarcelles</Place>
        <Place x={1134} y={483} size={11.8} dot={[1130.5, 487.5]}>Argenteuil</Place>
        <Place x={1203} y={504} size={11.8} dot={[1199.3, 508.7]}>Bobigny</Place>
        <Place x={1090} y={562} size={11.8} dot={[1086.5, 566]}>Versailles</Place>
        <Place x={1208} y={569} size={12}>Créteil</Place>
        <Place x={1243.5} y={537.5} size={10.6} dot={[1240.3, 541.3]}>Noisy-le-Grand</Place>
        <Place x={1363.3} y={476} size={11} dot={[1360, 479.5]}>Meaux</Place>
        <Place x={810} y={598} size={10.8} dot={[806.2, 601.7]}>Dreux</Place>
        <Place x={979.3} y={650.5} size={10.8} dot={[975.7, 654.3]}>Rambouillet</Place>
        <Place x={855} y={759} size={11.9} dot={[851, 763.8]}>Chartres</Place>
        <Place x={1283.3} y={705.5} size={12} dot={[1279.5, 710]}>Melun</Place>
        <Place x={1298} y={780.5} size={10.5} dot={[1294.5, 785]}>Fontainebleau</Place>
        <Place x={1516.7} y={696.5} size={10.6} dot={[1513, 700.7]}>Provins</Place>
        <Place x={1587.8} y={733} size={10.4} dot={[1584.3, 737]}>Nogent-sur-Seine</Place>
        <Place x={1406} y={488} size={9.7} fill="#766d5c">174 m</Place>
        <Place x={882} y={837.5} size={9.7} fill="#766d5c">170 m</Place>
        <path d="M1403 489.5l2 4h-4zM879 839l2 4h-4z" fill="#6b6b6b" />
        <path d="M1296 848.4h3M1300 848.4h2" stroke="#555" strokeWidth={0.8} />
        <g letterSpacing={1.6} fontSize={10.5} fill="#777" stroke="#777" strokeWidth={0.2}>
          <text x={1201} y={615}>Île-de-</text>
          <text x={1202} y={627}>France</text>
        </g>
      </g>
      <g fontSize={11} fill="#5a9fc0" stroke={HALO} strokeWidth={1.6} paintOrder="stroke">
        <text transform="translate(1186 341) rotate(-42)" fontSize={10}>Oise</text>
        <text transform="translate(915 374) rotate(-82)" fontSize={9.6}>Epte</text>
        <text transform="translate(1095 791) rotate(-76)" fontSize={10}>Juine</text>
        <text transform="translate(1512 756) rotate(-24)" fontSize={10}>Seine</text>
      </g>
      {SHIELDS.map(([label, x, y, w]) => (
        <g key={label}>
          <rect x={x - w / 2} y={y - 6.5} width={w} height={13} fill="#fff" stroke="#9b9b9f" strokeWidth={1.2} />
          <text x={x} y={y + 3.4} fontSize={9.3} textAnchor="middle" fill="#505050" stroke="#505050" strokeWidth={0.25}>
            {label}
          </text>
        </g>
      ))}
      <HeatLayer />
      <Place x={1171} y={531} size={13}>Paris</Place>
    </svg>
  );
}

/* ---------- Panels ---------- */

function Card({ className = "", children }: { className?: string; children?: ReactNode }) {
  return <section className={`border border-[#dcdcdc] bg-white ${className}`}>{children}</section>;
}

function Title({ children }: { children: ReactNode }) {
  return <h2 className="truncate text-sm/5 font-medium tracking-[0.29px] text-[#151515]">{children}</h2>;
}

function Stat({ title, children, className = "" }: { title: string; children: ReactNode; className?: string }) {
  return (
    <Card className={`flex flex-col overflow-hidden px-2 pt-[7px] ${className}`}>
      <Title>{title}</Title>
      <div className="flex flex-1 items-end justify-center pb-px font-bold text-[#151515]">{children}</div>
    </Card>
  );
}

const TABS = [
  { label: "Page d'accueil" },
  { label: "Introduction" },
  { label: "Inondation: Crue centennale" },
  { label: "Inondation: 115% Crue centennale", active: true },
  { label: "Feu: 2030" },
  { label: "Feu: 2100" },
];

const BARS = [
  { label: "Circuit de voie", height: 209 },
  { label: "Gare", height: 11 },
  { label: "Passerelle", height: 12 },
  { label: "Pont-route", height: 9 },
  { label: "Poste de redressement", height: 36 },
  { label: "Poste électrique", height: 4 },
];

const Y_TICKS = [
  { value: 800, y: 11 },
  { value: 600, y: 66 },
  { value: 400, y: 122 },
  { value: 200, y: 177 },
  { value: 0, y: 233 },
];

function BarChart() {
  const left = 45.5;
  const step = 113.8;
  return (
    <svg className="mt-[21px] block h-[250px] w-[744px]" viewBox="0 0 744 250" fontFamily="Lato, sans-serif" fill="#3c3c3c">
      <g stroke="#c9c9c9" strokeWidth={1} shapeRendering="crispEdges">
        {Y_TICKS.map((t) => (
          <line key={t.value} x1={left - 5} x2={left + step * 6} y1={t.y + 0.5} y2={t.y + 0.5} />
        ))}
        {[0, 1, 2, 3, 4, 5, 6].map((i) => (
          <line key={i} x1={left + step * i} x2={left + step * i} y1={11} y2={233} />
        ))}
        {BARS.map((b, i) => (
          <line key={b.label} x1={left + step * (i + 0.5)} x2={left + step * (i + 0.5)} y1={233} y2={239} />
        ))}
      </g>
      {BARS.map((b, i) => (
        <g key={b.label}>
          <rect x={left + step * i + 11.2} y={233.5 - b.height} width={91.8} height={b.height} fill="#149ece" stroke="#7fc4e0" strokeWidth={0.7} />
          <text x={left + step * (i + 0.5) + 0.5} y={245} fontSize={11.5} textAnchor="middle">
            {b.label}
          </text>
        </g>
      ))}
      {Y_TICKS.map((t) => (
        <text key={t.value} x={left - 9} y={t.y + 2.5} fontSize={11.3} textAnchor="end">
          {t.value}
        </text>
      ))}
    </svg>
  );
}

function BridgeLogo() {
  return (
    <svg className="h-[34px] w-8" viewBox="0 0 32 34" fill="none" stroke="#1a1a1a">
      <path d="M7.5 1v18M24.5 1v18" strokeWidth={1.5} />
      <path d="M5.5 2.5h4M22.5 2.5h4" strokeWidth={0.8} />
      <path d="M1 9.5Q5.5 7 7.5 2.5Q11 8.5 16 8.5T24.5 2.5Q26.5 7 31 9.5" strokeWidth={1} />
      <path d="M3.5 8v4M5.5 6v6M10 6v6M12.5 8v4M16 9v3M19.5 8v4M22 6v6M26.5 6v6M28.5 8v4" strokeWidth={0.45} />
      <path d="M1 12.5h30" strokeWidth={2} />
      <path d="M1 22h30M1 26.8h30" strokeWidth={1.2} />
      <path d="M1 24.4h30" strokeWidth={3.2} />
      <path d="M3 24.4h27" stroke="#d9d9d9" strokeWidth={1.5} strokeDasharray="3 2.4" />
      <path d="M1 29.2h30" strokeWidth={0.8} />
      <path d="M1.5 31h29.5" strokeWidth={3} strokeDasharray="0.8 2.1" />
      <path d="M1 33.4h30" strokeWidth={1} />
    </svg>
  );
}

export default function App() {
  return (
    <div className="flex h-[945px] w-[1698px] flex-col overflow-hidden bg-[#f8f8f6] font-[Lato,sans-serif] text-[#151515]">
      <nav className="grid h-[54px] shrink-0 grid-cols-6 items-start bg-[#dfdfdf] pt-[7px] pr-9 pl-8">
        {TABS.map((t) => (
          <a key={t.label} className={t.active ? "rounded-full bg-[#ff7122] pt-[3px] pb-[6px] text-center text-sm/5 tracking-[0.27px] text-white" : "pt-[3px] pb-[6px] text-center text-sm/5 tracking-[0.3px]"}>
            {t.label}
          </a>
        ))}
      </nav>

      <div className="flex flex-1 flex-col gap-2 pt-2 pr-2 pb-1.5 pl-1">
        <Card className="flex h-[46px] shrink-0 items-center pl-4">
          <BridgeLogo />
          <h1 className="ml-4 flex items-baseline pb-[5px]">
            <span className="text-[27px]/9 tracking-[0.1px]">ClimateViz</span>
            <span className="ml-[7px] text-base tracking-[0.28px] text-[#2b2b2b]">Vulnérabilité de l'infrastructure par rapport aux aléas climatiques</span>
          </h1>
        </Card>

        <main className="flex min-h-0 flex-1 gap-2">
          <div className="flex w-[746px] flex-col">
            <div className="grid grid-cols-2 gap-2">
              <Stat title="Nombre total d'actifs ponctuels" className="h-[81px]">
                <span className="flex gap-[6px] text-[33px]/[38px] tracking-[0.3px]">
                  <span>14</span>
                  <span>708</span>
                </span>
              </Stat>
              <Stat title="Nombre d'actifs ponctuels vulnérables aux inondati…" className="h-[81px]">
                <span className="flex gap-[6px] text-[33px]/[38px] tracking-[0.3px]">
                  <span>1</span>
                  <span>013</span>
                </span>
              </Stat>
              <Stat title="Longueur totale des actifs linéaires" className="h-[79px]">
                <span className="text-[31px]/[36px]">7586 Km</span>
              </Stat>
              <Stat title="Longueur d'actifs vulnérables aux inondations" className="h-[79px]">
                <span className="text-[31px]/[36px]">463 Km</span>
              </Stat>
            </div>

            <Card className="mt-[7px] h-[316px] shrink-0 pt-[7px]">
              <div className="px-2">
                <Title>Différentes catégories d'actifs ponctuels impactés</Title>
              </div>
              <BarChart />
            </Card>
            <div className="flex gap-2 pl-4">
              <div className="relative -mt-px h-[38px] border-x border-b-2 border-x-[#dcdcdc] border-b-[#007ac2] bg-white px-4 pt-[7px] text-sm/5 tracking-[0.31px] text-[#2b2b2b]">Nb d'actifs ponctuels impactés par catégorie</div>
              <div className="h-[37px] border-x border-b-2 border-[#dcdcdc] bg-white px-4 pt-[6px] text-sm/5 tracking-[0.35px] text-[#2b2b2b]">Longueur d'actifs linéaires impactés par catégorie</div>
            </div>
            <Card className="mt-[9px] h-8 shrink-0 pt-[3px] text-center text-sm/5 font-bold tracking-[0.25px]">Veuillez utiliser l'outil de sélection de la carte afin d'afficher la liste des actifs impactés</Card>
            <div className="mt-2 grid flex-1 grid-cols-2 gap-2">
              {["Liste des actifs ponctuels sélectionnés", "Liste des actifs linéaires sélectionnés"].map((t) => (
                <Card key={t} className="flex flex-col px-2 pt-[7px]">
                  <Title>{t}</Title>
                  <p className="flex flex-1 items-center justify-center pt-2.5 text-sm/5 tracking-[0.27px] text-[#3c3c3c]">Sélection requise sur un ou plusieurs éléments</p>
                </Card>
              ))}
            </div>
          </div>

          <div className="flex w-[932px] flex-col">
            <Card className="flex h-[166px] shrink-0 flex-col overflow-hidden pt-[7px]">
              <div className="px-2">
                <Title>Filtre des résultats par commune</Title>
                <div className="mt-[24px] flex h-8 items-center border border-[#8c8c8c] pl-[11px]">
                  <svg className="size-4" viewBox="0 0 16 16" fill="none" stroke="#6a6a6a" strokeWidth={1.1}>
                    <circle cx="6" cy="6.3" r="4.4" />
                    <path d="M9.2 9.5l4.6 4.6" />
                  </svg>
                  <span className="ml-[13px] pb-px text-sm/5 tracking-[0.3px] text-[#6f6f6f]">Recherche...</span>
                </div>
              </div>
              <div className="mt-3 flex min-h-0 flex-1">
                <ul className="flex-1 overflow-hidden">
                  {["Abbéville-la-Rivière", "Ableiges", "Ablis"].map((c) => (
                    <li key={c} className="h-[28.5px] border-t border-[#c9c9c9] pt-[2px] pl-5 text-sm/5 tracking-[0.2px] text-[#2b2b2b]">
                      {c}
                    </li>
                  ))}
                </ul>
                <div className="w-[7px] bg-[#dedede]">
                  <div className="h-[18px] bg-[#c8c8c8]" />
                </div>
              </div>
            </Card>

            <Card className="relative mt-2 h-[574px] shrink-0 overflow-hidden">
              <ParisMap />
              <div className="flex h-[14px] items-center justify-between px-[5px] pt-px text-xs/[14px] tracking-[0.13px] text-[#4a4a4a]">
                <span>Esri, CGIAR, USGS | Esri, TomTom, Garmin, Foursquare, FAO, METI/NASA, USGS</span>
                <span>Powered by Esri</span>
              </div>
              <button className="absolute top-[15px] left-[15px] flex size-8 items-center justify-center rounded-sm bg-white shadow-[0_2px_10px_rgba(0,0,0,0.15)]">
                <svg className="size-4" viewBox="0 0 16 16" fill="none" stroke="#555">
                  <path d="M1 1.5h14M1.5 1v14M14.5 1v6M1 14.5h6" strokeDasharray="2 1.5" />
                  <path d="M10 7.5v6.2l1.5-1.4 1.2 2.9 1.2-.5-1.2-2.8h2z" fill="#aaa" strokeWidth={0.8} />
                </svg>
              </button>
              <button className="absolute top-[15px] right-[14px] flex size-8 items-center justify-center rounded-sm bg-white shadow-[0_2px_10px_rgba(0,0,0,0.15)]">
                <svg className="size-4" viewBox="0 0 16 16" fill="none" stroke="#6a6a6a" strokeWidth={1.1}>
                  <path d="M4 2.8l4 4 4-4M4 8.8l4 4 4-4" />
                </svg>
              </button>
            </Card>

            <Card className="mt-[9px] flex h-[66px] shrink-0 overflow-hidden">
              <div className="flex-1 pt-1 pl-[5px] text-sm/[18px] tracking-[0.2px] text-[#2b2b2b]">
                <p className="font-bold text-[#151515]">Sources de données:</p>
                <p>Zones inondées potentielles : Institut de Paris / Sensibilité physique des actifs : matrice Systra</p>
                <p>Actifs réseau ferroviaire national : SNCF / Actifs poste électrique : Enedis</p>
              </div>
              <div className="w-[7px] bg-[#dedede]">
                <div className="h-[50px] bg-[#c8c8c8]" />
              </div>
            </Card>
          </div>
        </main>
      </div>
    </div>
  );
}
